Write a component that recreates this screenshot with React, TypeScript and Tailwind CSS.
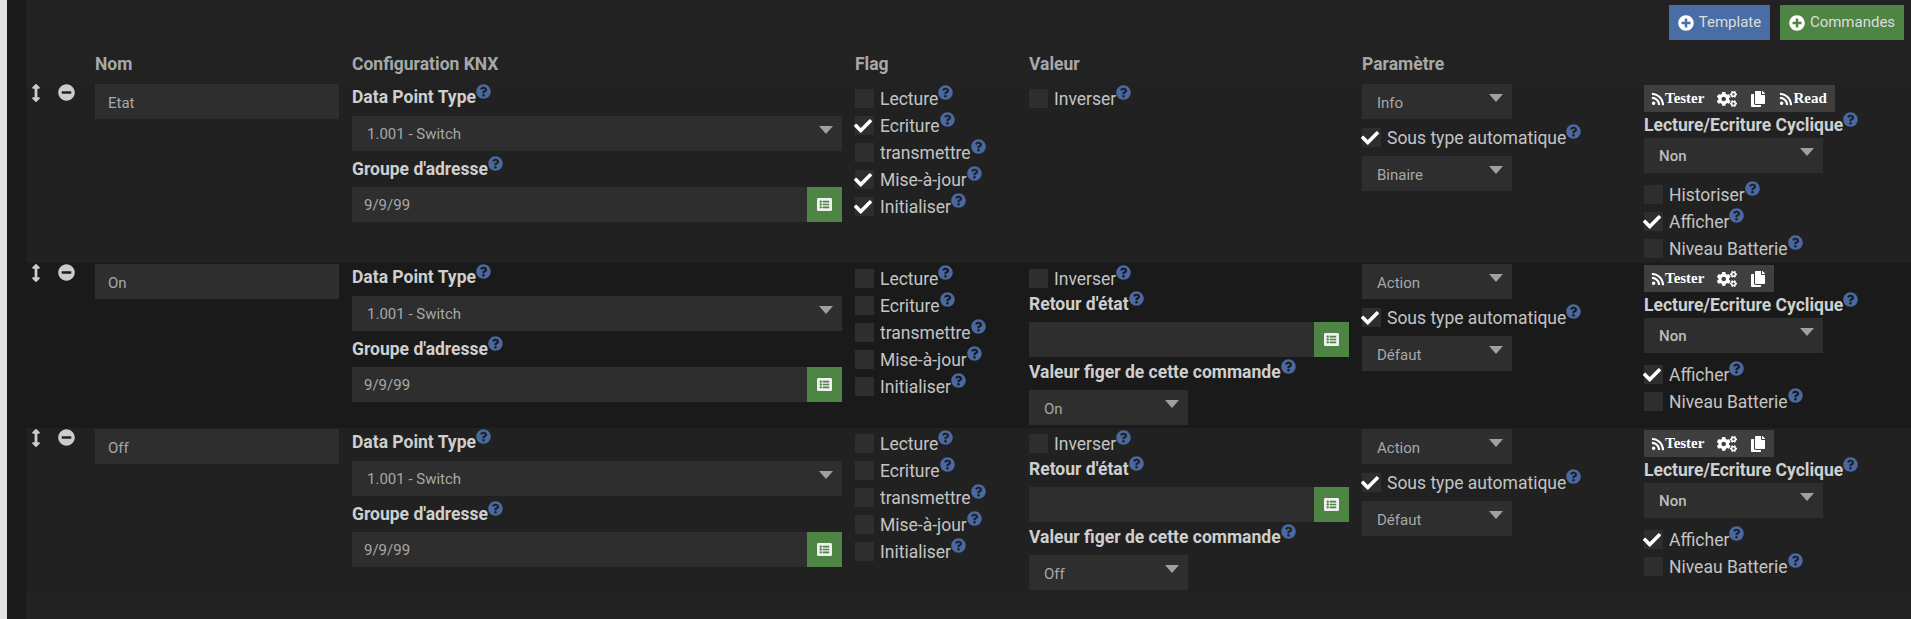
import React from 'react';
import {
  FaArrowsAltV,
  FaCheck,
  FaCogs,
  FaCopy,
  FaListAlt,
  FaMinusCircle,
  FaPlusCircle,
  FaQuestionCircle,
  FaRss,
} from 'react-icons/fa';

type Flag = { label: string; on?: boolean };

type Cmd = {
  name: string;
  flags: boolean[];
  kind: string;
  sub: string;
  retour?: boolean;
  figer?: string;
  read?: boolean;
  histo?: boolean;
  afficher: boolean;
};

const cmds: Cmd[] = [
  { name: 'Etat', flags: [false, true, false, true, true], kind: 'Info', sub: 'Binaire', read: true, histo: true, afficher: true },
  { name: 'On', flags: [false, false, false, false, false], kind: 'Action', sub: 'Défaut', retour: true, figer: 'On', afficher: true },
  { name: 'Off', flags: [false, false, false, false, false], kind: 'Action', sub: 'Défaut', retour: true, figer: 'Off', afficher: true },
];

const flagNames = ['Lecture', 'Ecriture', 'transmettre', 'Mise-à-jour', 'Initialiser'];

function Help() {
  return <FaQuestionCircle className="text-[#4a69a3] text-[15px] -mt-[12px] shrink-0" />;
}

function Label({ text }: { text: string }) {
  return (
    <div className="flex items-center h-[24px] text-[17.5px] font-bold text-[#cfcfcf] whitespace-nowrap">
      {text}
      <Help />
    </div>
  );
}

function Check({ label, on }: Flag) {
  return (
    <div className="flex items-center h-[27px] text-[#c4c4c4] text-[17.5px] whitespace-nowrap">
      <span className="relative w-[19px] h-[19px] bg-[#2e2e2e] mr-[6px] shrink-0">
        {on && <FaCheck className="absolute -left-[1px] top-[1px] text-white text-[18px]" />}
      </span>
      <span className="pt-[2px]">{label}</span>
      <Help />
    </div>
  );
}

function Select({ value, width, strong, tight }: { value: string; width: string; strong?: boolean; tight?: boolean }) {
  return (
    <div className={`flex justify-between items-start h-[35px] bg-[#2e2e2e] pl-[15px] pr-[9px] text-[15px] ${strong ? 'text-[#bdbdbd] font-medium' : 'text-[#a8a8a8]'} ${width}`}>
      <span className={`self-center ${tight ? 'pt-[1px]' : 'pt-[3px]'}`}>{value}</span>
      <span className="mt-[10px] w-0 h-0 border-l-[7px] border-r-[7px] border-t-[8px] border-l-transparent border-r-transparent border-t-[#a0a0a0]" />
    </div>
  );
}

function AddressInput({ value, width }: { value: string; width: string }) {
  return (
    <div className={`flex h-[35px] bg-[#2e2e2e] text-[15px] text-[#a8a8a8] ${width}`}>
      <span className="flex-1 self-center pl-[12px] pt-[1px]">{value}</span>
      <span className="flex items-center justify-center w-[35px] bg-[#4f8544] text-[#f0f0f0] text-[15px]">
        <FaListAlt />
      </span>
    </div>
  );
}

function Actions({ read }: { read?: boolean }) {
  return (
    <div className="inline-flex items-center h-[27px] bg-[#3f3f3f] pl-[7px] pr-[8px] gap-[13px] text-white text-[15px] font-bold font-['Liberation_Serif',serif]">
      <span className="flex items-center">
        <FaRss className="text-[14px]" />
        Tester
      </span>
      <FaCogs className="text-[20px]" />
      <FaCopy className="text-[16px]" />
      {read && (
        <span className="flex items-center">
          <FaRss className="text-[14px]" />
          Read
        </span>
      )}
    </div>
  );
}

function Row({ cmd, index }: { cmd: Cmd; index: number }) {
  const band = index === 1 ? 'bg-[#1a1a1a]' : 'bg-[#212121]';
  const height = index === 0 ? 'h-[180px]' : 'h-[165px]';
  return (
    <div className={`flex ${band} ${height}`}>
      <div className="flex w-[69px] text-[#cccccc]">
        <FaArrowsAltV className="ml-[1px] mt-[1px] text-[18px]" />
        <FaMinusCircle className="ml-[13px] mt-[1px] text-[17px]" />
      </div>

      <div className="w-[257px] pt-[1px]">
        <div className="flex items-center h-[35px] w-[244px] bg-[#2e2e2e] pl-[13px] pt-[3px] text-[15px] text-[#a8a8a8]">
          {cmd.name}
        </div>
      </div>

      <div className="w-[503px] pt-[2px]">
        <Label text="Data Point Type" />
        <div className="mt-[7px]">
          <Select value="1.001 - Switch" width="w-[490px]" tight />
        </div>
        <div className="mt-[6px]">
          <Label text="Groupe d'adresse" />
        </div>
        <div className="mt-[6px]">
          <AddressInput value="9/9/99" width="w-[490px]" />
        </div>
      </div>

      <div className="w-[174px] pt-[2px]">
        {flagNames.map((f, i) => (
          <Check key={f} label={f} on={cmd.flags[i]} />
        ))}
      </div>

      <div className="w-[333px] pt-[2px]">
        <Check label="Inverser" />
        {cmd.retour && (
          <>
            <Label text="Retour d'état" />
            <div className="mt-[6px]">
              <AddressInput value="" width="w-[320px]" />
            </div>
            <div className="mt-[3px]">
              <Label text="Valeur figer de cette commande" />
            </div>
            <div className="mt-[6px]">
              <Select value={cmd.figer ?? ''} width="w-[159px]" />
            </div>
          </>
        )}
      </div>

      <div className="w-[282px] pt-[1px]">
        <Select value={cmd.kind} width="w-[150px]" />
        <div className="mt-[5px]">
          <Check label="Sous type automatique" on />
        </div>
        <div className="mt-[5px]">
          <Select value={cmd.sub} width="w-[150px]" />
        </div>
      </div>

      <div className="flex-1 pt-[2px]">
        <Actions read={cmd.read} />
        <div className="mt-[1px]">
          <Label text="Lecture/Ecriture Cyclique" />
        </div>
        <Select value="Non" width="w-[179px]" strong />
        <div className="mt-[8px]">
          {cmd.histo && <Check label="Historiser" />}
          <Check label="Afficher" on={cmd.afficher} />
          <Check label="Niveau Batterie" />
        </div>
      </div>
    </div>
  );
}

export default function App() {
  return (
    <div className="flex h-[619px] bg-[#1a1a1a] font-[Roboto,sans-serif] overflow-hidden">
      <div className="w-[7px] bg-[#e2e2e2] shrink-0" />
      <div className="w-[19px] shrink-0" />
      <div className="flex-1 bg-[#222222]">
        <div className="flex justify-end gap-[10px] pt-[5px] pr-[7px]">
          <button className="flex items-center gap-[5px] h-[35px] w-[101px] justify-center bg-[#4a6da5] text-[#dddddd] text-[15px]">
            <FaPlusCircle className="text-[16px] text-white" />
            Template
          </button>
          <button className="flex items-center gap-[5px] h-[35px] w-[124px] justify-center bg-[#4f8544] text-[#dddddd] text-[15px]">
            <FaPlusCircle className="text-[16px] text-white" />
            Commandes
          </button>
        </div>

        <div className="flex items-center h-[24px] mt-[12px] mb-[7px] text-[17.5px] font-bold text-[#a8a8a8]">
          <div className="w-[69px]" />
          <div className="w-[257px]">Nom</div>
          <div className="w-[503px]">Configuration KNX</div>
          <div className="w-[174px]">Flag</div>
          <div className="w-[333px]">Valeur</div>
          <div className="w-[282px]">Paramètre</div>
        </div>

        {cmds.map((c, i) => (
          <Row key={c.name} cmd={c} index={i} />
        ))}
      </div>
    </div>
  );
}
